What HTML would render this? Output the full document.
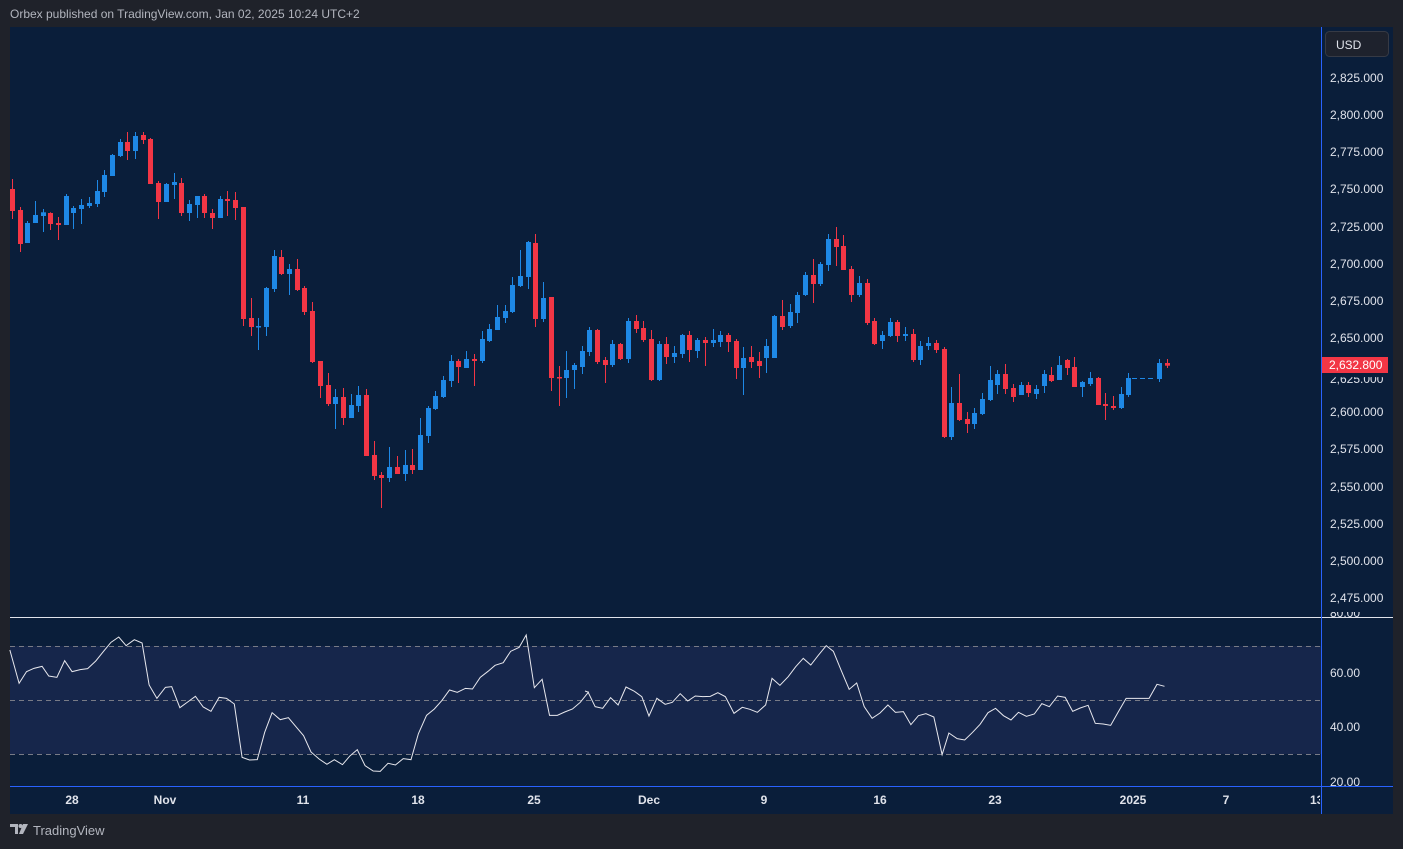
<!DOCTYPE html>
<html><head><meta charset="utf-8"><style>
*{margin:0;padding:0;box-sizing:border-box}
body{width:1403px;height:849px;background:#1f222a;font-family:"Liberation Sans",sans-serif;position:relative;overflow:hidden}
.hdr{position:absolute;left:10px;top:7px;font-size:12px;color:#b2b5be}
.panel{position:absolute;left:10px;top:27px;width:1383px;height:787px;background:#0a1e3a}
.lbl{position:absolute;font-size:12px;color:#e0e3eb;line-height:14px}
.t{position:absolute;top:793px;font-size:12px;color:#e0e3eb;font-weight:bold;transform:translateX(-50%)}
</style></head><body>
<div class="hdr">Orbex published on TradingView.com, Jan 02, 2025 10:24 UTC+2</div>
<div class="panel"></div>
<svg id="s" width="1403" height="849" style="position:absolute;left:0;top:0">
<rect x="10" y="646" width="1311" height="108" fill="#16264b"/>
<g stroke="#787b86" stroke-dasharray="5,4" stroke-width="1">
<line x1="10" y1="646.5" x2="1321" y2="646.5"/><line x1="10" y1="700.5" x2="1321" y2="700.5"/><line x1="10" y1="754.5" x2="1321" y2="754.5"/></g>
<line x1="10" y1="617.5" x2="1393" y2="617.5" stroke="#e0e3eb"/>
<line x1="10" y1="786.5" x2="1393" y2="786.5" stroke="#2962ff"/>
<line x1="1321.5" y1="27" x2="1321.5" y2="814" stroke="#2962ff"/>
<g id="c"></g>
<g transform="translate(8,625) scale(0.3704,0.3333)"><polyline fill="none" stroke="#e8e8ee" stroke-width="1" vector-effect="non-scaling-stroke" points="5,75 30,175 50,140 70,130 92,124 110,153 132,157 153,107 173,140 195,134 215,131 237,108 258,79 278,52 299,36 319,62 341,44 362,54 381,180 402,220 425,187 442,185 464,248 485,231 506,214 527,246 548,259 570,217 590,220 611,237 632,397 652,405 673,404 693,322 713,263 735,284 757,278 778,306 798,332 818,381 840,402 861,418 881,404 903,419 923,393 943,374 964,422 986,438 1005,439 1026,415 1046,420 1067,401 1088,404 1108,326 1130,271 1151,252 1171,227 1192,195 1213,202 1235,190 1254,192 1275,157 1296,139 1315,121 1337,113 1357,79 1380,67 1399,30 1421,188 1442,163 1462,271 1483,271 1503,261 1524,252 1545,232 1568,200"/></g>
<g transform="translate(585,625) scale(0.3763,0.3333)"><polyline fill="none" stroke="#e8e8ee" stroke-width="1" vector-effect="non-scaling-stroke" points="0,198 8,201 27,245 47,250 68,218 88,240 109,186 130,198 151,215 170,273 191,220 213,238 232,232 253,206 273,228 293,213 313,215 333,214 353,203 373,215 396,265 418,247 438,253 458,262 480,240 497,160 518,181 540,155 560,125 580,100 600,120 620,91 641,62 660,79 680,134 702,193 722,174 742,245 763,280 784,264 805,240 825,262 846,260 866,299 886,272 906,266 927,276 949,389 967,324 989,341 1009,345 1030,322 1050,298 1071,263 1091,250 1112,272 1132,285 1152,262 1173,274 1194,267 1214,236 1234,245 1256,213 1276,217 1296,259 1316,249 1337,241 1356,295 1377,297 1397,301 1417,261 1438,220 1458,220 1479,220 1499,220 1520,178 1540,184"/></g>
<line x1="1132" y1="378.5" x2="1155" y2="378.5" stroke="#1e88e5" stroke-dasharray="5,3"/>
<rect x="1325.5" y="31.5" width="63" height="25" rx="4" fill="#1e222d" stroke="#363a45"/>
<rect x="1322" y="357" width="66" height="16" fill="#f23645"/>
<g transform="translate(10,824)" fill="#b2b5be"><path d="M0 0h8v10h-3v-7h-5z"/><circle cx="10.5" cy="2" r="2"/><path d="M13 0h5l-5 10h-4z"/></g>
</svg>
<div class="lbl" style="left:1336px;top:38px;color:#e0e3eb">USD</div>
<div id="pl"></div>
<div class="lbl" style="left:1329px;top:358px;color:#fff">2,632.800</div>
<div class="lbl" style="left:1330px;top:612px;height:8px;overflow:hidden;line-height:14px"><span style="position:relative;top:-6px">80.00</span></div>
<div class="lbl" style="left:1330px;top:666px">60.00</div>
<div class="lbl" style="left:1330px;top:720px">40.00</div>
<div class="lbl" style="left:1330px;top:775px">20.00</div>
<div class="t" style="left:72px">28</div><div class="t" style="left:165px">Nov</div><div class="t" style="left:303px">11</div><div class="t" style="left:418px">18</div><div class="t" style="left:534px">25</div><div class="t" style="left:649px">Dec</div><div class="t" style="left:764px">9</div><div class="t" style="left:880px">16</div><div class="t" style="left:995px">23</div><div class="t" style="left:1133px">2025</div><div class="t" style="left:1226px">7</div><div class="t" style="left:1310px;transform:none;width:10px;overflow:hidden">13</div>
<div style="position:absolute;left:33px;top:823px;font-size:13px;color:#b2b5be">TradingView</div>
<script>
var pl='';var p=['2,825.000','2,800.000','2,775.000','2,750.000','2,725.000','2,700.000','2,675.000','2,650.000','2,625.000','2,600.000','2,575.000','2,550.000','2,525.000','2,500.000','2,475.000'];
for(var i=0;i<p.length;i++){var y=78+i*37.14;if(i==8)continue;pl+='<div class="lbl" style="left:1330px;top:'+(y-7)+'px">'+p[i]+'</div>';}
pl+='<div class="lbl" style="left:1330px;top:'+(78+8*37.14-7+4)+'px;clip-path:inset(5px 0 0 0)">2,625.000</div>';
document.getElementById('pl').innerHTML=pl;
var segs=[[125,0,[[0,192,258,162,282],[0,255,357,246,381],[1,294,354,288,354],[1,270,294,228,294],[1,262,273,252,321],[0,264,297,262,315],[0,294,300,276,345],[1,213,300,207,300],[1,249,264,243,312],[1,240,252,222,297],[1,234,243,216,249],[1,198,237,165,246],[1,150,201,135,216],[1,90,153,87,153],[1,51,93,42,96],[0,51,78,21,105],[1,33,78,21,102],[0,30,45,21,57],[0,42,177,39,177],[0,174,231,168,282],[1,177,231,174,231],[1,171,180,144,222],[0,174,264,159,273],[1,237,264,225,288],[1,213,240,213,279],[0,213,264,207,279],[0,264,279,252,312],[1,222,279,213,279],[0,222,228,198,273],[0,225,249,201,285],[0,246,582,246,603],[0,579,606,519,633],[1,603,606,579,675],[1,489,606,486,633],[1,393,492,375,501],[0,396,447,375,450],[1,432,447,417,510],[0,432,495,402,498],[0,489,561,483,570]]],
[225,39,[[0,258,411,231,414],[0,408,483,408,519],[0,480,537,444,543],[1,516,537,492,612],[0,516,579,489,600],[1,540,579,507,579],[1,510,543,483,561],[0,510,693,492,693],[0,690,753,648,765],[0,750,759,741,849],[1,726,759,666,771],[0,726,747,693,747],[1,720,747,675,768],[0,720,735,672,747],[1,630,735,579,735],[1,549,633,543,654],[1,513,552,498,555],[1,465,516,453,519],[1,408,468,390,486],[0,408,426,402,474],[1,402,429,378,429],[0,402,408,387,483],[1,342,408,318,414],[1,312,348,297,351],[1,276,315,240,315],[1,258,279,240,294],[1,180,261,156,264],[1,153,183,75,186],[1,51,156,48,192],[0,54,282,27,306],[1,219,282,171,291],[0,216,459,216,498],[0,456,459,423,543],[1,435,459,378,519],[1,420,435,414,492],[1,378,426,363,447],[1,315,381,306,393],[0,315,411,312,417]]],
[220,77,[[0,420,435,411,489],[1,372,435,360,441],[0,372,417,369,420],[1,303,417,294,429],[0,303,327,285,339],[0,324,360,303,366],[0,357,480,330,483],[1,372,480,363,483],[0,372,411,351,432],[1,399,411,378,429],[1,345,402,342,414],[0,345,390,333,426],[1,360,393,354,414],[0,360,369,351,438],[1,360,369,327,381],[1,345,366,333,381],[0,345,366,339,396],[0,363,444,357,477],[1,414,444,381,525],[0,411,426,378,444],[0,423,438,396,474],[1,378,414,357,459],[1,288,414,285,414],[0,288,321,240,330],[1,276,318,252,324],[1,225,279,216,309],[1,165,225,156,228],[0,165,192,117,249],[1,132,192,126,198],[1,57,135,42,153],[0,57,81,21,138],[0,78,150,45,150],[0,147,225,138,246],[1,189,225,168,231],[0,189,309,177,315],[0,303,372,294,375],[1,345,363,333,387],[1,306,348,294,351]]],
[300,115,[[0,66,108,60,126],[1,102,108,81,123],[0,102,180,87,186],[1,138,180,123,195],[1,129,138,111,150],[0,129,150,120,159],[0,147,411,141,414],[1,309,411,261,420],[0,309,360,222,363],[0,357,372,336,399],[1,339,372,324,387],[1,297,342,279,345],[1,240,300,198,303],[1,222,255,210,282],[0,222,267,192,282],[0,264,291,252,306],[1,255,285,246,285],[0,255,279,246,291],[1,267,282,255,297],[1,222,258,210,279],[0,225,243,201,246],[1,195,240,168,240],[0,180,204,177,225],[0,201,261,171,261],[1,246,261,243,291],[1,234,252,216,258],[0,234,315,231,315],[0,312,318,279,360],[0,318,324,288,330],[1,282,324,261,327],[1,234,285,219,291]]],
[300,149,[[1,189,237,177,246],[0,189,197,177,204]]]];
var h='';
segs.forEach(function(s){var oy=s[0],i0=s[1];s[2].forEach(function(c,k){var i=i0+k;var x=Math.round(11.8+7.7*i);var col=c[0]?'#1e88e5':'#f23645';var bt=c[1]/3+oy,bb=c[2]/3+oy,wt=c[3]/3+oy,wb=c[4]/3+oy;var bh=Math.max(1.5,bb-bt);
h+='<rect x="'+x+'" y="'+wt.toFixed(1)+'" width="1" height="'+(wb-wt).toFixed(1)+'" fill="'+col+'"/><rect x="'+(x-2)+'" y="'+bt.toFixed(1)+'" width="5" height="'+bh.toFixed(1)+'" fill="'+col+'"/>';});});
document.getElementById('c').innerHTML=h;
</script>
</body></html>
